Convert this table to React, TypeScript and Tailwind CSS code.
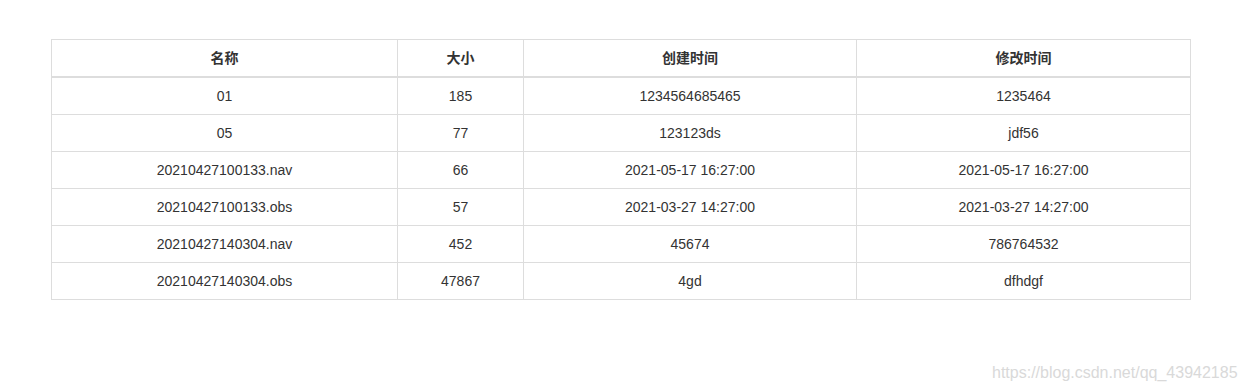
import React from "react";

const rows = [
  ["01", "185", "1234564685465", "1235464"],
  ["05", "77", "123123ds", "jdf56"],
  ["20210427100133.nav", "66", "2021-05-17 16:27:00", "2021-05-17 16:27:00"],
  ["20210427100133.obs", "57", "2021-03-27 14:27:00", "2021-03-27 14:27:00"],
  ["20210427140304.nav", "452", "45674", "786764532"],
  ["20210427140304.obs", "47867", "4gd", "dfhdgf"],
];

export default function App() {
  return (
    <div
      className="relative w-[1246px] h-[392px] bg-white text-[#333] text-[14px] leading-[20px] overflow-hidden"
      style={{ fontFamily: '"Liberation Sans", Arial, "Noto Sans CJK SC", sans-serif' }}
    >
      <div className="pl-[51px] pt-[39px]">
        <table className="table-fixed border-collapse w-[1139px] border border-[#ddd]">
          <colgroup>
            <col className="w-[346px]" />
            <col className="w-[126px]" />
            <col className="w-[333px]" />
            <col className="w-[334px]" />
          </colgroup>
          <thead>
            <tr>
              {["名称", "大小", "创建时间", "修改时间"].map((h) => (
                <th
                  key={h}
                  className="border border-[#ddd] border-b-2 px-2 py-2 text-center font-bold"
                >
                  {h}
                </th>
              ))}
            </tr>
          </thead>
          <tbody>
            {rows.map((r, i) => (
              <tr key={i}>
                {r.map((c, j) => (
                  <td key={j} className="border border-[#ddd] px-2 py-2 text-center">
                    {c}
                  </td>
                ))}
              </tr>
            ))}
          </tbody>
        </table>
      </div>
      <div
        className="absolute left-[992px] top-[363px] text-[16px] leading-[20px] text-[#d9d9d9]"
        style={{ fontFamily: '"Liberation Sans", Arial, sans-serif' }}
      >
        https://blog.csdn.net/qq_43942185
      </div>
    </div>
  );
}
